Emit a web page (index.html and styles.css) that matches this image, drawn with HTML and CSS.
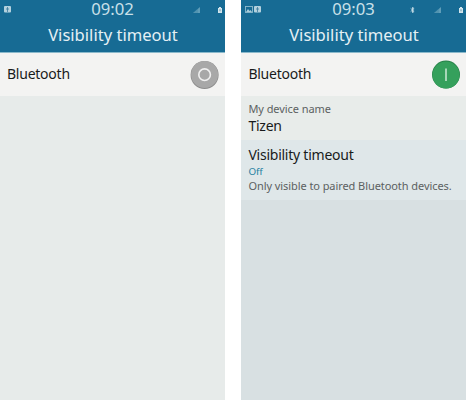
FILE: index.html
```html
<!DOCTYPE html>
<html lang="en">
<head>
<meta charset="utf-8">
<title>Visibility timeout</title>
<link rel="stylesheet" href="styles.css">
</head>
<body>
<main class="screens">
  <section class="phone">
    <header class="header">
      <div class="status">
        <div class="status-left">
          <svg class="app-icon" width="7" height="7" viewBox="0 0 7 7"><rect width="7" height="6.5" rx="1" fill="#b4d1de"/><path d="M3.5 1v5M2 3h3" stroke="#39799a" stroke-width=".8"/></svg>
        </div>
        <span class="clock">09:02</span>
        <div class="status-right">
          <svg class="signal" width="7" height="6" viewBox="0 0 7 6"><path d="M0 6h7V0z" fill="#5f9db8"/><path d="M2 4v2M4 2v4" stroke="#2e7b9f" stroke-width=".5"/></svg>
          <svg width="4" height="6" viewBox="0 0 4 6"><path d="M1 0h2v1h1v5H0V1h1z" fill="#d2e5ec"/><path d="M2 2v2.5M1.2 3.2h1.6" stroke="#6a9cb4" stroke-width=".6"/></svg>
        </div>
      </div>
      <h1 class="title">Visibility timeout</h1>
    </header>
    <div class="toggle-row">
      <span class="label">Bluetooth</span>
      <svg class="switch" width="30" height="30" viewBox="0 0 30 30"><circle cx="14.6" cy="15" r="14" fill="#8c8c8c"/><circle cx="14.6" cy="14.5" r="13.5" fill="#a8a8a8"/><circle cx="14.6" cy="14.7" r="5.8" fill="none" stroke="#f0f0f0" stroke-width="1.6"/></svg>
    </div>
  </section>
  <section class="phone phone-on">
    <header class="header">
      <div class="status">
        <div class="status-left">
          <svg width="8" height="7" viewBox="0 0 8 7"><rect x=".5" y=".5" width="7" height="6" fill="none" stroke="#8fbbce" stroke-width=".9"/><path d="M1 6l2-3 1.5 2 1-1L7 6z" fill="#a9cddb"/></svg>
          <svg width="7" height="7" viewBox="0 0 7 7"><rect width="7" height="6.5" rx="1" fill="#b4d1de"/><path d="M3.5 1v5M2 3h3" stroke="#39799a" stroke-width=".8"/></svg>
        </div>
        <span class="clock">09:03</span>
        <div class="status-right">
          <svg class="bt" width="5" height="6" viewBox="0 0 5 6"><path d="M.7 1.4l3.4 3L2.5 5.7V.3l1.6 1.3-3.4 3" fill="none" stroke="#c8dfe8" stroke-width=".9"/></svg>
          <svg class="signal" width="7" height="6" viewBox="0 0 7 6"><path d="M0 6h7V0z" fill="#5f9db8"/><path d="M2 4v2M4 2v4" stroke="#2e7b9f" stroke-width=".5"/></svg>
          <svg width="4" height="6" viewBox="0 0 4 6"><path d="M1 0h2v1h1v5H0V1h1z" fill="#d2e5ec"/><path d="M2 2v2.5M1.2 3.2h1.6" stroke="#6a9cb4" stroke-width=".6"/></svg>
        </div>
      </div>
      <h1 class="title">Visibility timeout</h1>
    </header>
    <div class="toggle-row">
      <span class="label">Bluetooth</span>
      <svg class="switch" width="30" height="30" viewBox="0 0 30 30"><circle cx="15" cy="14.6" r="14" fill="#278249"/><circle cx="15" cy="15" r="13.5" fill="#35a05c"/><path d="M15 8.5v12.5" stroke="#c5e5cf" stroke-width="1.6"/></svg>
    </div>
    <div class="device">
      <span class="caption">My device name</span>
      <span class="label device-name">Tizen</span>
    </div>
    <div class="timeout">
      <span class="label">Visibility timeout</span>
      <span class="value">Off</span>
      <span class="caption hint">Only visible to paired Bluetooth devices.</span>
    </div>
  </section>
</main>
</body>
</html>
```

FILE: styles.css
```css
* { box-sizing: border-box; }
body { margin: 0; background: #fff; font-family: "Noto Sans", sans-serif; }
.screens { display: flex; gap: 16px; width: 466px; height: 400px; }
.phone { width: 225px; height: 400px; background: #e7ebea; }
.phone-on { background: #d8e0e2; }
.header { height: 53px; background: #176b94; border-bottom: 1px solid #8bb9cb; color: #e4f0f4; }
.status { display: grid; grid-template-columns: 1fr auto 1fr; align-items: start; height: 18px; }
.status-left { display: flex; gap: 1px; padding: 6px 0 0 4px; }
.status-left svg, .status-right svg { display: block; }
.status-right { display: flex; justify-content: flex-end; align-items: center; padding: 7px 3px 0 0; }
.signal { margin-right: 18px; }
.bt { margin-right: 19px; }
.clock { font-size: 16.7px; line-height: 17px; color: #c9e0e9; }
.title { margin: 0; padding-left: 1px; font-size: 16.6px; font-weight: 400; line-height: 33px; text-align: center; }
.toggle-row { display: flex; align-items: center; justify-content: space-between; height: 43px; padding: 0 5px 0 7px; background: #f3f3f2; }
.toggle-row .label { padding-bottom: 2px; }
.phone-on .toggle-row { padding-left: 7.4px; }
.label { font-size: 14px; line-height: 18px; letter-spacing: -0.24px; color: #191b1b; white-space: nowrap; }
.caption { font-size: 11px; line-height: 14px; letter-spacing: -0.07px; color: #5c6161; white-space: nowrap; }
.device, .timeout { display: flex; flex-direction: column; padding-left: 7.4px; }
.device { height: 44px; padding-top: 6px; background: #e8ecea; }
.device-name { padding-top: 1px; }
.timeout { height: 60px; padding-top: 6px; background: #dfe7e9; }
.value { font-size: 9.8px; line-height: 15px; color: #257fa1; }
```
